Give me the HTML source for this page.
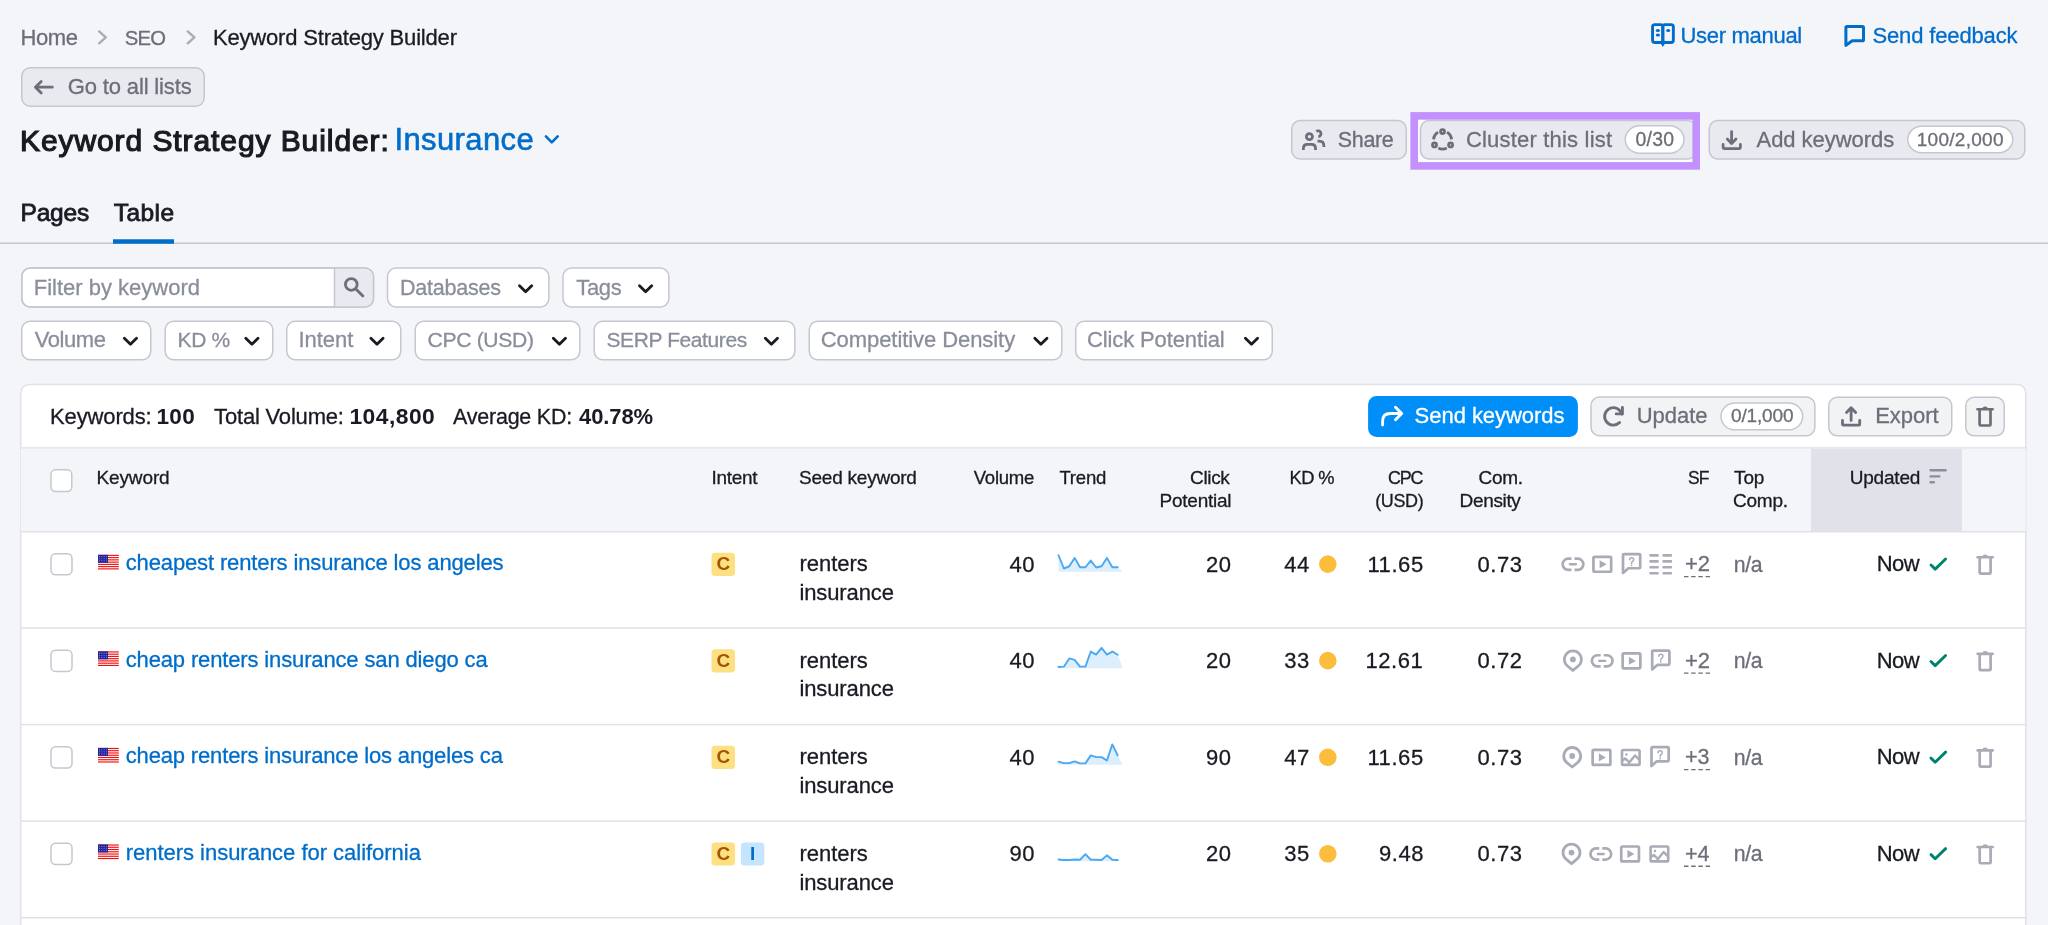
<!DOCTYPE html>
<html><head><meta charset="utf-8"><title>Keyword Strategy Builder</title>
<style>
html,body{margin:0;padding:0;background:#f4f5f9;width:2048px;height:925px;overflow:hidden;}
svg{position:absolute;left:0;top:0;display:block;font-family:"Liberation Sans",sans-serif;will-change:transform;}
</style></head><body>
<svg width="2048" height="925" viewBox="0 0 2048 925">
<path d="M99.1 31.4 L105.8 37.35 L99.1 43.3" fill="none" stroke="#a9abb6" stroke-width="2.4" stroke-linecap="round" stroke-linejoin="round"/>
<path d="M187.7 31.4 L194.4 37.35 L187.7 43.3" fill="none" stroke="#a9abb6" stroke-width="2.4" stroke-linecap="round" stroke-linejoin="round"/>
<g fill="none" stroke="#006dca" stroke-width="2.9" stroke-linejoin="round">
<rect x="1652.55" y="24.60" width="10.25" height="17.85" rx="2.20" fill="none" stroke="#006dca" stroke-width="2.9"/>
<rect x="1662.80" y="24.60" width="10.55" height="17.85" rx="2.20" fill="none" stroke="#006dca" stroke-width="2.9"/>
</g>
<path d="M1660.3 43 L1665.3 43 L1662.8 46.9 Z" fill="#006dca"/>
<ellipse cx="1657.9" cy="30.5" rx="2.1" ry="1.5" fill="#006dca"/>
<ellipse cx="1657.9" cy="35.1" rx="2.1" ry="1.5" fill="#006dca"/>
<ellipse cx="1668.2" cy="30.5" rx="2.1" ry="1.5" fill="#006dca"/>
<path d="M1845.9 45.4 V27.6 Q1845.9 26.5 1847 26.5 H1862.4 Q1863.5 26.5 1863.5 27.6 V39.7 Q1863.5 40.8 1862.4 40.8 H1852.2 Z" fill="none" stroke="#006dca" stroke-width="3.0" stroke-linecap="round" stroke-linejoin="round"/>
<rect x="21.75" y="67.75" width="182.50" height="38.50" rx="8.50" fill="#e9eaf0" stroke="#c4c7cf" stroke-width="1.5"/>
<path d="M52.3 87.2 H35.4 M41.2 81.4 L35.4 87.2 L41.2 93" fill="none" stroke="#6c6e79" stroke-width="2.8" stroke-linecap="round" stroke-linejoin="round"/>
<path d="M545.9 136.4 L551.8 142.4 L557.7 136.4" fill="none" stroke="#006dca" stroke-width="2.6" stroke-linecap="round" stroke-linejoin="round"/>
<rect x="1291.75" y="120.50" width="114.50" height="38.50" rx="8.50" fill="#e9eaf0" stroke="#c4c7cf" stroke-width="1.5"/>
<circle cx="1309.4" cy="136.6" r="3.05" fill="none" stroke="#6c6e79" stroke-width="2.75"/>
<path d="M1303.4 150 V148.3 Q1303.4 144.3 1307.4 144.3 H1311.5 Q1315.5 144.3 1315.5 148.3 V150" fill="none" stroke="#6c6e79" stroke-width="2.75" stroke-linecap="butt" stroke-linejoin="round"/>
<path d="M1316.3 131.4 A2.95 2.95 0 1 1 1318.3 136.7" fill="none" stroke="#6c6e79" stroke-width="2.75" stroke-linecap="butt" stroke-linejoin="round"/>
<path d="M1317.5 141.2 H1319.2 Q1323.9 141.2 1323.9 146 V147" fill="none" stroke="#6c6e79" stroke-width="2.75" stroke-linecap="butt" stroke-linejoin="round"/>
<rect x="1414.20" y="115.90" width="282.00" height="50.00" rx="0.00" fill="#fbfbfe"/>
<rect x="1420.50" y="120.50" width="275.75" height="38.50" rx="8.50" fill="#e9eaf0" stroke="#c4c7cf" stroke-width="1.5"/>
<circle cx="1442.55" cy="131.6" r="2.05" fill="none" stroke="#6c6e79" stroke-width="2.7"/>
<circle cx="1434.5" cy="144.9" r="2.05" fill="none" stroke="#6c6e79" stroke-width="2.7"/>
<circle cx="1450.6" cy="144.9" r="2.05" fill="none" stroke="#6c6e79" stroke-width="2.7"/>
<path d="M1447.02 132.35 A8.95 8.95 0 0 1 1451.47 139.32" fill="none" stroke="#6c6e79" stroke-width="2.9" stroke-linecap="butt" stroke-linejoin="round"/>
<path d="M1446.75 148.00 A8.95 8.95 0 0 1 1438.35 148.00" fill="none" stroke="#6c6e79" stroke-width="2.9" stroke-linecap="butt" stroke-linejoin="round"/>
<path d="M1433.63 139.32 A8.95 8.95 0 0 1 1438.08 132.35" fill="none" stroke="#6c6e79" stroke-width="2.9" stroke-linecap="butt" stroke-linejoin="round"/>
<rect x="1625.25" y="125.75" width="58.75" height="27.50" rx="14.50" fill="#ffffff" stroke="#c4c7cf" stroke-width="1.5"/>
<rect x="1414.2" y="115.9" width="282" height="50" fill="none" stroke="#c391fd" stroke-width="7.6"/>
<rect x="1709.25" y="120.50" width="315.50" height="38.50" rx="8.50" fill="#e9eaf0" stroke="#c4c7cf" stroke-width="1.5"/>
<path d="M1731.6 131.6 V143.2 M1727.3 139 L1731.6 143.6 L1736 139" fill="none" stroke="#6c6e79" stroke-width="2.75" stroke-linecap="round" stroke-linejoin="round"/>
<path d="M1723.1 144.4 V147.6 Q1723.1 148.7 1724.2 148.7 H1739.3 Q1740.4 148.7 1740.4 147.6 V144.4" fill="none" stroke="#6c6e79" stroke-width="2.75" stroke-linecap="round" stroke-linejoin="round"/>
<rect x="1907.75" y="126.25" width="105.00" height="26.50" rx="14.00" fill="#ffffff" stroke="#c4c7cf" stroke-width="1.5"/>
<rect x="0.00" y="242.50" width="2048.00" height="1.50" rx="0.00" fill="#c4c7cf"/>
<rect x="113.00" y="239.25" width="61.00" height="4.50" rx="0.00" fill="#006dca"/>
<rect x="21.75" y="268.00" width="351.75" height="39.00" rx="8.50" fill="#ffffff" stroke="#c4c7cf" stroke-width="1.5"/>
<path d="M334.5 268 H365.2 A8.3 8.3 0 0 1 373.5 276.3 V298.7 A8.3 8.3 0 0 1 365.2 307 H334.5 Z" fill="#e9eaf0"/>
<rect x="333.75" y="268.00" width="1.50" height="39.00" rx="0.00" fill="#c4c7cf"/>
<rect x="21.75" y="268.00" width="351.75" height="39.00" rx="8.50" fill="none" stroke="#c4c7cf" stroke-width="1.5"/>
<circle cx="351.3" cy="284.45" r="5.85" fill="none" stroke="#6c6e79" stroke-width="2.8"/>
<path d="M356.4 289.6 L362.9 296.1" fill="none" stroke="#6c6e79" stroke-width="2.8" stroke-linecap="round" stroke-linejoin="round"/>
<rect x="387.50" y="268.00" width="161.35" height="39.00" rx="8.50" fill="#ffffff" stroke="#c4c7cf" stroke-width="1.5"/>
<path d="M519.50 285.80 L525.60 291.80 L531.70 285.80" fill="none" stroke="#191b23" stroke-width="2.8" stroke-linecap="round" stroke-linejoin="round"/>
<rect x="563.00" y="268.00" width="105.85" height="39.00" rx="8.50" fill="#ffffff" stroke="#c4c7cf" stroke-width="1.5"/>
<path d="M639.50 285.80 L645.60 291.80 L651.70 285.80" fill="none" stroke="#191b23" stroke-width="2.8" stroke-linecap="round" stroke-linejoin="round"/>
<rect x="21.75" y="321.35" width="129.00" height="38.30" rx="8.50" fill="#ffffff" stroke="#c4c7cf" stroke-width="1.5"/>
<path d="M124.35 338.30 L130.45 344.30 L136.55 338.30" fill="none" stroke="#191b23" stroke-width="2.8" stroke-linecap="round" stroke-linejoin="round"/>
<rect x="165.15" y="321.35" width="107.60" height="38.30" rx="8.50" fill="#ffffff" stroke="#c4c7cf" stroke-width="1.5"/>
<path d="M245.80 338.30 L251.90 344.30 L258.00 338.30" fill="none" stroke="#191b23" stroke-width="2.8" stroke-linecap="round" stroke-linejoin="round"/>
<rect x="286.75" y="321.35" width="114.00" height="38.30" rx="8.50" fill="#ffffff" stroke="#c4c7cf" stroke-width="1.5"/>
<path d="M370.90 338.30 L377.00 344.30 L383.10 338.30" fill="none" stroke="#191b23" stroke-width="2.8" stroke-linecap="round" stroke-linejoin="round"/>
<rect x="415.25" y="321.35" width="164.60" height="38.30" rx="8.50" fill="#ffffff" stroke="#c4c7cf" stroke-width="1.5"/>
<path d="M553.30 338.30 L559.40 344.30 L565.50 338.30" fill="none" stroke="#191b23" stroke-width="2.8" stroke-linecap="round" stroke-linejoin="round"/>
<rect x="594.25" y="321.35" width="200.60" height="38.30" rx="8.50" fill="#ffffff" stroke="#c4c7cf" stroke-width="1.5"/>
<path d="M765.30 338.30 L771.40 344.30 L777.50 338.30" fill="none" stroke="#191b23" stroke-width="2.8" stroke-linecap="round" stroke-linejoin="round"/>
<rect x="809.25" y="321.35" width="252.50" height="38.30" rx="8.50" fill="#ffffff" stroke="#c4c7cf" stroke-width="1.5"/>
<path d="M1034.80 338.30 L1040.90 344.30 L1047.00 338.30" fill="none" stroke="#191b23" stroke-width="2.8" stroke-linecap="round" stroke-linejoin="round"/>
<rect x="1075.75" y="321.35" width="196.50" height="38.30" rx="8.50" fill="#ffffff" stroke="#c4c7cf" stroke-width="1.5"/>
<path d="M1245.40 338.30 L1251.50 344.30 L1257.60 338.30" fill="none" stroke="#191b23" stroke-width="2.8" stroke-linecap="round" stroke-linejoin="round"/>
<rect x="20.75" y="384.50" width="2005.00" height="800.00" rx="8.50" fill="#ffffff" stroke="#e0e1e9" stroke-width="1.5"/>
<rect x="20.00" y="447.25" width="2006.50" height="1.50" rx="0.00" fill="#e0e1e9"/>
<rect x="20.75" y="448.75" width="2005.00" height="82.50" rx="0.00" fill="#f4f5f9"/>
<rect x="1811.00" y="448.75" width="151.00" height="82.50" rx="0.00" fill="#e0e1e9"/>
<rect x="20.00" y="531.00" width="2006.50" height="1.50" rx="0.00" fill="#e0e1e9"/>
<rect x="20.00" y="627.30" width="2006.50" height="1.50" rx="0.00" fill="#e0e1e9"/>
<rect x="20.00" y="723.85" width="2006.50" height="1.50" rx="0.00" fill="#e0e1e9"/>
<rect x="20.00" y="820.40" width="2006.50" height="1.50" rx="0.00" fill="#e0e1e9"/>
<rect x="20.00" y="916.95" width="2006.50" height="1.50" rx="0.00" fill="#e0e1e9"/>
<rect x="1368.10" y="396.00" width="209.80" height="40.90" rx="8.50" fill="#008ff8"/>
<path d="M1382.6 425 V421.2 Q1382.6 413.5 1390.3 413.5 H1401.2 M1395.5 407.3 L1401.7 413.5 L1395.5 419.7" fill="none" stroke="#ffffff" stroke-width="2.9" stroke-linecap="round" stroke-linejoin="round"/>
<rect x="1591.00" y="397.00" width="223.85" height="38.75" rx="8.50" fill="#f2f3f5" stroke="#c4c7cf" stroke-width="1.5"/>
<path d="M1619.59 422.59 A8.75 8.75 0 1 1 1621.85 414.14" fill="none" stroke="#6c6e79" stroke-width="2.9" stroke-linecap="round" stroke-linejoin="round"/>
<path d="M1616.2 413.9 H1622.4 V407.4" fill="none" stroke="#6c6e79" stroke-width="2.9" stroke-linecap="round" stroke-linejoin="round"/>
<rect x="1721.00" y="403.00" width="81.65" height="26.85" rx="14.00" fill="#ffffff" stroke="#c4c7cf" stroke-width="1.5"/>
<rect x="1828.75" y="397.25" width="123.00" height="38.60" rx="8.50" fill="#f2f3f5" stroke="#c4c7cf" stroke-width="1.5"/>
<path d="M1851.1 420.6 V408.5 M1846.5 412.4 L1851.1 407.7 L1855.7 412.4" fill="none" stroke="#6c6e79" stroke-width="2.8" stroke-linecap="round" stroke-linejoin="round"/>
<path d="M1842.5 420.4 V424.1 Q1842.5 425.2 1843.6 425.2 H1858.6 Q1859.7 425.2 1859.7 424.1 V420.4" fill="none" stroke="#6c6e79" stroke-width="2.8" stroke-linecap="round" stroke-linejoin="round"/>
<rect x="1965.75" y="397.25" width="38.50" height="38.60" rx="8.50" fill="#f2f3f5" stroke="#c4c7cf" stroke-width="1.5"/>
<path d="M1977.50 409.20 H1992.60" fill="none" stroke="#6c6e79" stroke-width="2.6" stroke-linecap="round" stroke-linejoin="round"/><path d="M1982.20 409.40 Q1982.20 406.40 1985.05 406.40 Q1987.90 406.40 1987.90 409.40 Z" fill="#6c6e79"/><path d="M1979.60 409.70 V424.50 Q1979.60 425.50 1980.60 425.50 H1989.50 Q1990.50 425.50 1990.50 424.50 V409.70" fill="none" stroke="#6c6e79" stroke-width="2.7" stroke-linecap="round" stroke-linejoin="round"/>
<rect x="51.00" y="469.85" width="20.75" height="21.65" rx="4.50" fill="#ffffff" stroke="#c4c7cf" stroke-width="1.5"/>
<path d="M1930.6 470.3 H1945.6 M1930.6 476.4 H1939.3 M1930.6 482.3 H1933.8" fill="none" stroke="#8a8e9b" stroke-width="2.4" stroke-linecap="round" stroke-linejoin="round"/>
<rect x="51.00" y="553.65" width="21.00" height="21.20" rx="4.50" fill="#ffffff" stroke="#c4c7cf" stroke-width="1.5"/>
<rect x="98.00" y="554.80" width="20.80" height="14.70" rx="0.00" fill="#ffffff"/><rect x="98.00" y="554.80" width="20.80" height="1.15" rx="0.00" fill="#f20f0f"/><rect x="98.00" y="557.05" width="20.80" height="1.15" rx="0.00" fill="#f20f0f"/><rect x="98.00" y="559.30" width="20.80" height="1.15" rx="0.00" fill="#f20f0f"/><rect x="98.00" y="561.55" width="20.80" height="1.15" rx="0.00" fill="#f20f0f"/><rect x="98.00" y="563.80" width="20.80" height="1.15" rx="0.00" fill="#f20f0f"/><rect x="98.00" y="566.05" width="20.80" height="1.15" rx="0.00" fill="#f20f0f"/><rect x="98.00" y="568.30" width="20.80" height="1.15" rx="0.00" fill="#f20f0f"/><rect x="98.00" y="554.80" width="10.00" height="8.00" rx="0.00" fill="#23239c"/><circle cx="99.50" cy="556.60" r="0.55" fill="#9090d0"/><circle cx="101.80" cy="556.60" r="0.55" fill="#9090d0"/><circle cx="104.10" cy="556.60" r="0.55" fill="#9090d0"/><circle cx="106.40" cy="556.60" r="0.55" fill="#9090d0"/><circle cx="99.50" cy="558.70" r="0.55" fill="#9090d0"/><circle cx="101.80" cy="558.70" r="0.55" fill="#9090d0"/><circle cx="104.10" cy="558.70" r="0.55" fill="#9090d0"/><circle cx="106.40" cy="558.70" r="0.55" fill="#9090d0"/><circle cx="99.50" cy="560.80" r="0.55" fill="#9090d0"/><circle cx="101.80" cy="560.80" r="0.55" fill="#9090d0"/><circle cx="104.10" cy="560.80" r="0.55" fill="#9090d0"/><circle cx="106.40" cy="560.80" r="0.55" fill="#9090d0"/>
<rect x="711.50" y="552.75" width="23.50" height="23.20" rx="3.50" fill="#fce081"/>
<polygon points="1058.50,571.70 1058.50,555.25 1063.88,568.50 1069.26,566.25 1074.64,557.90 1080.02,567.25 1085.40,567.25 1090.78,560.60 1096.16,567.50 1101.54,566.25 1106.92,557.90 1112.30,567.25 1117.68,567.25 1122.60,571.70" fill="#ddeefd"/>
<polyline points="1058.50,555.25 1063.88,568.50 1069.26,566.25 1074.64,557.90 1080.02,567.25 1085.40,567.25 1090.78,560.60 1096.16,567.50 1101.54,566.25 1106.92,557.90 1112.30,567.25 1117.68,567.25" fill="none" stroke="#4aa9f3" stroke-width="1.9" stroke-linejoin="round" stroke-linecap="round"/>
<circle cx="1327.8" cy="564.10" r="8.8" fill="#fdbd3c"/>
<g transform="translate(1573.00 564.30)"><path d="M-1.55 -5.6 H-4.75 A5.6 5.6 0 0 0 -4.75 5.6 H-1.55 M1.55 -5.6 H4.75 A5.6 5.6 0 0 1 4.75 5.6 H1.55" fill="none" stroke="#a9abb6" stroke-width="2.7" stroke-linecap="butt" stroke-linejoin="round"/><path d="M-2.9 0 H2.9" fill="none" stroke="#a9abb6" stroke-width="2.4" stroke-linecap="round" stroke-linejoin="round"/></g>
<g transform="translate(1602.30 564.30)"><rect x="-8.85" y="-7.45" width="17.70" height="14.90" rx="1.20" fill="none" stroke="#a9abb6" stroke-width="2.7"/><path d="M-2.65 -4.05 L4.3 0.05 L-2.65 4.0 Z" fill="#a9abb6"/></g>
<g transform="translate(1631.60 564.30)"><path d="M-8.6 8.6 V-9.25 Q-8.6 -10.25 -7.6 -10.25 H7.6 Q8.6 -10.25 8.6 -9.25 V2.95 Q8.6 3.95 7.6 3.95 H-3.25 Z" fill="none" stroke="#a9abb6" stroke-width="2.7" stroke-linecap="round" stroke-linejoin="round"/><path d="M-2 -4.6 Q-2 -6.6 0.1 -6.6 Q2.1 -6.6 2.1 -4.7 Q2.1 -3.5 0.9 -2.8 Q0 -2.3 0 -1.2 V-0.8" fill="none" stroke="#a9abb6" stroke-width="1.5" stroke-linecap="round" stroke-linejoin="round"/><circle cx="0" cy="1.0" r="0.9" fill="#a9abb6"/></g>
<g transform="translate(1660.90 564.30)"><path d="M-10.4 -8.9 H-3.3 M2.7 -8.9 H10.0 M-10.4 -2.9 H-3.3 M2.7 -2.9 H10.0 M-10.4 3.0 H-3.3 M2.7 3.0 H10.0 M-10.4 8.9 H-3.3 M2.7 8.9 H10.0 " fill="none" stroke="#a9abb6" stroke-width="2.6" stroke-linecap="round" stroke-linejoin="round"/></g>
<line x1="1684" y1="576.60" x2="1710" y2="576.60" stroke="#6c6e79" stroke-width="1.3" stroke-dasharray="4.4 2.8"/>
<path d="M1931 565.00 L1935.2 569.10 L1945.6 559.00" fill="none" stroke="#00836a" stroke-width="2.9" stroke-linecap="round" stroke-linejoin="round"/>
<path d="M1977.60 557.30 H1992.70" fill="none" stroke="#a9abb6" stroke-width="2.6" stroke-linecap="round" stroke-linejoin="round"/><path d="M1982.30 557.50 Q1982.30 554.50 1985.15 554.50 Q1988.00 554.50 1988.00 557.50 Z" fill="#a9abb6"/><path d="M1979.70 557.80 V572.60 Q1979.70 573.60 1980.70 573.60 H1989.60 Q1990.60 573.60 1990.60 572.60 V557.80" fill="none" stroke="#a9abb6" stroke-width="2.7" stroke-linecap="round" stroke-linejoin="round"/>
<rect x="51.00" y="650.20" width="21.00" height="21.20" rx="4.50" fill="#ffffff" stroke="#c4c7cf" stroke-width="1.5"/>
<rect x="98.00" y="651.35" width="20.80" height="14.70" rx="0.00" fill="#ffffff"/><rect x="98.00" y="651.35" width="20.80" height="1.15" rx="0.00" fill="#f20f0f"/><rect x="98.00" y="653.60" width="20.80" height="1.15" rx="0.00" fill="#f20f0f"/><rect x="98.00" y="655.85" width="20.80" height="1.15" rx="0.00" fill="#f20f0f"/><rect x="98.00" y="658.10" width="20.80" height="1.15" rx="0.00" fill="#f20f0f"/><rect x="98.00" y="660.35" width="20.80" height="1.15" rx="0.00" fill="#f20f0f"/><rect x="98.00" y="662.60" width="20.80" height="1.15" rx="0.00" fill="#f20f0f"/><rect x="98.00" y="664.85" width="20.80" height="1.15" rx="0.00" fill="#f20f0f"/><rect x="98.00" y="651.35" width="10.00" height="8.00" rx="0.00" fill="#23239c"/><circle cx="99.50" cy="653.15" r="0.55" fill="#9090d0"/><circle cx="101.80" cy="653.15" r="0.55" fill="#9090d0"/><circle cx="104.10" cy="653.15" r="0.55" fill="#9090d0"/><circle cx="106.40" cy="653.15" r="0.55" fill="#9090d0"/><circle cx="99.50" cy="655.25" r="0.55" fill="#9090d0"/><circle cx="101.80" cy="655.25" r="0.55" fill="#9090d0"/><circle cx="104.10" cy="655.25" r="0.55" fill="#9090d0"/><circle cx="106.40" cy="655.25" r="0.55" fill="#9090d0"/><circle cx="99.50" cy="657.35" r="0.55" fill="#9090d0"/><circle cx="101.80" cy="657.35" r="0.55" fill="#9090d0"/><circle cx="104.10" cy="657.35" r="0.55" fill="#9090d0"/><circle cx="106.40" cy="657.35" r="0.55" fill="#9090d0"/>
<rect x="711.50" y="649.30" width="23.50" height="23.20" rx="3.50" fill="#fce081"/>
<polygon points="1058.50,668.25 1058.50,666.95 1063.88,666.65 1069.26,658.45 1074.64,659.85 1080.02,666.65 1085.40,666.65 1090.78,651.55 1096.16,654.55 1101.54,647.95 1106.92,654.55 1112.30,651.55 1117.68,654.75 1122.60,668.25" fill="#ddeefd"/>
<polyline points="1058.50,666.95 1063.88,666.65 1069.26,658.45 1074.64,659.85 1080.02,666.65 1085.40,666.65 1090.78,651.55 1096.16,654.55 1101.54,647.95 1106.92,654.55 1112.30,651.55 1117.68,654.75" fill="none" stroke="#4aa9f3" stroke-width="1.9" stroke-linejoin="round" stroke-linecap="round"/>
<circle cx="1327.8" cy="660.65" r="8.8" fill="#fdbd3c"/>
<g transform="translate(1572.90 660.85)"><path d="M0 9.6 L-5.39 5.17 A8.5 8.5 0 1 1 5.39 5.17 Z" fill="none" stroke="#a9abb6" stroke-width="2.8" stroke-linecap="round" stroke-linejoin="round"/><circle cx="0" cy="-1.4" r="2.9" fill="#a9abb6"/></g>
<g transform="translate(1602.20 660.85)"><path d="M-1.55 -5.6 H-4.75 A5.6 5.6 0 0 0 -4.75 5.6 H-1.55 M1.55 -5.6 H4.75 A5.6 5.6 0 0 1 4.75 5.6 H1.55" fill="none" stroke="#a9abb6" stroke-width="2.7" stroke-linecap="butt" stroke-linejoin="round"/><path d="M-2.9 0 H2.9" fill="none" stroke="#a9abb6" stroke-width="2.4" stroke-linecap="round" stroke-linejoin="round"/></g>
<g transform="translate(1631.50 660.85)"><rect x="-8.85" y="-7.45" width="17.70" height="14.90" rx="1.20" fill="none" stroke="#a9abb6" stroke-width="2.7"/><path d="M-2.65 -4.05 L4.3 0.05 L-2.65 4.0 Z" fill="#a9abb6"/></g>
<g transform="translate(1660.80 660.85)"><path d="M-8.6 8.6 V-9.25 Q-8.6 -10.25 -7.6 -10.25 H7.6 Q8.6 -10.25 8.6 -9.25 V2.95 Q8.6 3.95 7.6 3.95 H-3.25 Z" fill="none" stroke="#a9abb6" stroke-width="2.7" stroke-linecap="round" stroke-linejoin="round"/><path d="M-2 -4.6 Q-2 -6.6 0.1 -6.6 Q2.1 -6.6 2.1 -4.7 Q2.1 -3.5 0.9 -2.8 Q0 -2.3 0 -1.2 V-0.8" fill="none" stroke="#a9abb6" stroke-width="1.5" stroke-linecap="round" stroke-linejoin="round"/><circle cx="0" cy="1.0" r="0.9" fill="#a9abb6"/></g>
<line x1="1684" y1="673.15" x2="1710" y2="673.15" stroke="#6c6e79" stroke-width="1.3" stroke-dasharray="4.4 2.8"/>
<path d="M1931 661.55 L1935.2 665.65 L1945.6 655.55" fill="none" stroke="#00836a" stroke-width="2.9" stroke-linecap="round" stroke-linejoin="round"/>
<path d="M1977.60 653.85 H1992.70" fill="none" stroke="#a9abb6" stroke-width="2.6" stroke-linecap="round" stroke-linejoin="round"/><path d="M1982.30 654.05 Q1982.30 651.05 1985.15 651.05 Q1988.00 651.05 1988.00 654.05 Z" fill="#a9abb6"/><path d="M1979.70 654.35 V669.15 Q1979.70 670.15 1980.70 670.15 H1989.60 Q1990.60 670.15 1990.60 669.15 V654.35" fill="none" stroke="#a9abb6" stroke-width="2.7" stroke-linecap="round" stroke-linejoin="round"/>
<rect x="51.00" y="746.75" width="21.00" height="21.20" rx="4.50" fill="#ffffff" stroke="#c4c7cf" stroke-width="1.5"/>
<rect x="98.00" y="747.90" width="20.80" height="14.70" rx="0.00" fill="#ffffff"/><rect x="98.00" y="747.90" width="20.80" height="1.15" rx="0.00" fill="#f20f0f"/><rect x="98.00" y="750.15" width="20.80" height="1.15" rx="0.00" fill="#f20f0f"/><rect x="98.00" y="752.40" width="20.80" height="1.15" rx="0.00" fill="#f20f0f"/><rect x="98.00" y="754.65" width="20.80" height="1.15" rx="0.00" fill="#f20f0f"/><rect x="98.00" y="756.90" width="20.80" height="1.15" rx="0.00" fill="#f20f0f"/><rect x="98.00" y="759.15" width="20.80" height="1.15" rx="0.00" fill="#f20f0f"/><rect x="98.00" y="761.40" width="20.80" height="1.15" rx="0.00" fill="#f20f0f"/><rect x="98.00" y="747.90" width="10.00" height="8.00" rx="0.00" fill="#23239c"/><circle cx="99.50" cy="749.70" r="0.55" fill="#9090d0"/><circle cx="101.80" cy="749.70" r="0.55" fill="#9090d0"/><circle cx="104.10" cy="749.70" r="0.55" fill="#9090d0"/><circle cx="106.40" cy="749.70" r="0.55" fill="#9090d0"/><circle cx="99.50" cy="751.80" r="0.55" fill="#9090d0"/><circle cx="101.80" cy="751.80" r="0.55" fill="#9090d0"/><circle cx="104.10" cy="751.80" r="0.55" fill="#9090d0"/><circle cx="106.40" cy="751.80" r="0.55" fill="#9090d0"/><circle cx="99.50" cy="753.90" r="0.55" fill="#9090d0"/><circle cx="101.80" cy="753.90" r="0.55" fill="#9090d0"/><circle cx="104.10" cy="753.90" r="0.55" fill="#9090d0"/><circle cx="106.40" cy="753.90" r="0.55" fill="#9090d0"/>
<rect x="711.50" y="745.85" width="23.50" height="23.20" rx="3.50" fill="#fce081"/>
<polygon points="1058.50,764.80 1058.50,761.70 1063.88,763.10 1069.26,763.10 1074.64,761.40 1080.02,763.40 1085.40,763.40 1090.78,755.40 1096.16,757.10 1101.54,757.10 1106.92,760.50 1112.30,744.40 1117.68,755.40 1122.60,764.80" fill="#ddeefd"/>
<polyline points="1058.50,761.70 1063.88,763.10 1069.26,763.10 1074.64,761.40 1080.02,763.40 1085.40,763.40 1090.78,755.40 1096.16,757.10 1101.54,757.10 1106.92,760.50 1112.30,744.40 1117.68,755.40" fill="none" stroke="#4aa9f3" stroke-width="1.9" stroke-linejoin="round" stroke-linecap="round"/>
<circle cx="1327.8" cy="757.20" r="8.8" fill="#fdbd3c"/>
<g transform="translate(1572.20 757.40)"><path d="M0 9.6 L-5.39 5.17 A8.5 8.5 0 1 1 5.39 5.17 Z" fill="none" stroke="#a9abb6" stroke-width="2.8" stroke-linecap="round" stroke-linejoin="round"/><circle cx="0" cy="-1.4" r="2.9" fill="#a9abb6"/></g>
<g transform="translate(1601.50 757.40)"><rect x="-8.85" y="-7.45" width="17.70" height="14.90" rx="1.20" fill="none" stroke="#a9abb6" stroke-width="2.7"/><path d="M-2.65 -4.05 L4.3 0.05 L-2.65 4.0 Z" fill="#a9abb6"/></g>
<g transform="translate(1630.80 757.40)"><rect x="-8.80" y="-7.45" width="17.60" height="14.90" rx="1.20" fill="none" stroke="#a9abb6" stroke-width="2.6"/><circle cx="-4.4" cy="-2.9" r="1.25" fill="#a9abb6"/><path d="M-7.5 2.6 L-5.6 1.1 L-3 3.5 M-2 5.7 L4.2 -1.9 L7.9 1.75" fill="none" stroke="#a9abb6" stroke-width="2.4" stroke-linecap="round" stroke-linejoin="round"/></g>
<g transform="translate(1660.10 757.40)"><path d="M-8.6 8.6 V-9.25 Q-8.6 -10.25 -7.6 -10.25 H7.6 Q8.6 -10.25 8.6 -9.25 V2.95 Q8.6 3.95 7.6 3.95 H-3.25 Z" fill="none" stroke="#a9abb6" stroke-width="2.7" stroke-linecap="round" stroke-linejoin="round"/><path d="M-2 -4.6 Q-2 -6.6 0.1 -6.6 Q2.1 -6.6 2.1 -4.7 Q2.1 -3.5 0.9 -2.8 Q0 -2.3 0 -1.2 V-0.8" fill="none" stroke="#a9abb6" stroke-width="1.5" stroke-linecap="round" stroke-linejoin="round"/><circle cx="0" cy="1.0" r="0.9" fill="#a9abb6"/></g>
<line x1="1684" y1="769.70" x2="1710" y2="769.70" stroke="#6c6e79" stroke-width="1.3" stroke-dasharray="4.4 2.8"/>
<path d="M1931 758.10 L1935.2 762.20 L1945.6 752.10" fill="none" stroke="#00836a" stroke-width="2.9" stroke-linecap="round" stroke-linejoin="round"/>
<path d="M1977.60 750.40 H1992.70" fill="none" stroke="#a9abb6" stroke-width="2.6" stroke-linecap="round" stroke-linejoin="round"/><path d="M1982.30 750.60 Q1982.30 747.60 1985.15 747.60 Q1988.00 747.60 1988.00 750.60 Z" fill="#a9abb6"/><path d="M1979.70 750.90 V765.70 Q1979.70 766.70 1980.70 766.70 H1989.60 Q1990.60 766.70 1990.60 765.70 V750.90" fill="none" stroke="#a9abb6" stroke-width="2.7" stroke-linecap="round" stroke-linejoin="round"/>
<rect x="51.00" y="843.30" width="21.00" height="21.20" rx="4.50" fill="#ffffff" stroke="#c4c7cf" stroke-width="1.5"/>
<rect x="98.00" y="844.45" width="20.80" height="14.70" rx="0.00" fill="#ffffff"/><rect x="98.00" y="844.45" width="20.80" height="1.15" rx="0.00" fill="#f20f0f"/><rect x="98.00" y="846.70" width="20.80" height="1.15" rx="0.00" fill="#f20f0f"/><rect x="98.00" y="848.95" width="20.80" height="1.15" rx="0.00" fill="#f20f0f"/><rect x="98.00" y="851.20" width="20.80" height="1.15" rx="0.00" fill="#f20f0f"/><rect x="98.00" y="853.45" width="20.80" height="1.15" rx="0.00" fill="#f20f0f"/><rect x="98.00" y="855.70" width="20.80" height="1.15" rx="0.00" fill="#f20f0f"/><rect x="98.00" y="857.95" width="20.80" height="1.15" rx="0.00" fill="#f20f0f"/><rect x="98.00" y="844.45" width="10.00" height="8.00" rx="0.00" fill="#23239c"/><circle cx="99.50" cy="846.25" r="0.55" fill="#9090d0"/><circle cx="101.80" cy="846.25" r="0.55" fill="#9090d0"/><circle cx="104.10" cy="846.25" r="0.55" fill="#9090d0"/><circle cx="106.40" cy="846.25" r="0.55" fill="#9090d0"/><circle cx="99.50" cy="848.35" r="0.55" fill="#9090d0"/><circle cx="101.80" cy="848.35" r="0.55" fill="#9090d0"/><circle cx="104.10" cy="848.35" r="0.55" fill="#9090d0"/><circle cx="106.40" cy="848.35" r="0.55" fill="#9090d0"/><circle cx="99.50" cy="850.45" r="0.55" fill="#9090d0"/><circle cx="101.80" cy="850.45" r="0.55" fill="#9090d0"/><circle cx="104.10" cy="850.45" r="0.55" fill="#9090d0"/><circle cx="106.40" cy="850.45" r="0.55" fill="#9090d0"/>
<rect x="711.50" y="842.40" width="23.50" height="23.20" rx="3.50" fill="#fce081"/>
<rect x="740.90" y="842.40" width="23.50" height="23.20" rx="3.50" fill="#c4e5fd"/>
<polygon points="1058.50,861.35 1058.50,859.45 1063.88,859.95 1069.26,859.95 1074.64,859.45 1080.02,859.75 1085.40,854.15 1090.78,859.75 1096.16,859.75 1101.54,859.95 1106.92,855.35 1112.30,859.75 1117.68,859.95 1122.60,861.35" fill="#ddeefd"/>
<polyline points="1058.50,859.45 1063.88,859.95 1069.26,859.95 1074.64,859.45 1080.02,859.75 1085.40,854.15 1090.78,859.75 1096.16,859.75 1101.54,859.95 1106.92,855.35 1112.30,859.75 1117.68,859.95" fill="none" stroke="#4aa9f3" stroke-width="1.9" stroke-linejoin="round" stroke-linecap="round"/>
<circle cx="1327.8" cy="853.75" r="8.8" fill="#fdbd3c"/>
<g transform="translate(1571.50 853.95)"><path d="M0 9.6 L-5.39 5.17 A8.5 8.5 0 1 1 5.39 5.17 Z" fill="none" stroke="#a9abb6" stroke-width="2.8" stroke-linecap="round" stroke-linejoin="round"/><circle cx="0" cy="-1.4" r="2.9" fill="#a9abb6"/></g>
<g transform="translate(1600.80 853.95)"><path d="M-1.55 -5.6 H-4.75 A5.6 5.6 0 0 0 -4.75 5.6 H-1.55 M1.55 -5.6 H4.75 A5.6 5.6 0 0 1 4.75 5.6 H1.55" fill="none" stroke="#a9abb6" stroke-width="2.7" stroke-linecap="butt" stroke-linejoin="round"/><path d="M-2.9 0 H2.9" fill="none" stroke="#a9abb6" stroke-width="2.4" stroke-linecap="round" stroke-linejoin="round"/></g>
<g transform="translate(1630.10 853.95)"><rect x="-8.85" y="-7.45" width="17.70" height="14.90" rx="1.20" fill="none" stroke="#a9abb6" stroke-width="2.7"/><path d="M-2.65 -4.05 L4.3 0.05 L-2.65 4.0 Z" fill="#a9abb6"/></g>
<g transform="translate(1659.40 853.95)"><rect x="-8.80" y="-7.45" width="17.60" height="14.90" rx="1.20" fill="none" stroke="#a9abb6" stroke-width="2.6"/><circle cx="-4.4" cy="-2.9" r="1.25" fill="#a9abb6"/><path d="M-7.5 2.6 L-5.6 1.1 L-3 3.5 M-2 5.7 L4.2 -1.9 L7.9 1.75" fill="none" stroke="#a9abb6" stroke-width="2.4" stroke-linecap="round" stroke-linejoin="round"/></g>
<line x1="1684" y1="866.25" x2="1710" y2="866.25" stroke="#6c6e79" stroke-width="1.3" stroke-dasharray="4.4 2.8"/>
<path d="M1931 854.65 L1935.2 858.75 L1945.6 848.65" fill="none" stroke="#00836a" stroke-width="2.9" stroke-linecap="round" stroke-linejoin="round"/>
<path d="M1977.60 846.95 H1992.70" fill="none" stroke="#a9abb6" stroke-width="2.6" stroke-linecap="round" stroke-linejoin="round"/><path d="M1982.30 847.15 Q1982.30 844.15 1985.15 844.15 Q1988.00 844.15 1988.00 847.15 Z" fill="#a9abb6"/><path d="M1979.70 847.45 V862.25 Q1979.70 863.25 1980.70 863.25 H1989.60 Q1990.60 863.25 1990.60 862.25 V847.45" fill="none" stroke="#a9abb6" stroke-width="2.7" stroke-linecap="round" stroke-linejoin="round"/>
<text x="20.40" y="45.10" font-size="22" font-weight="400" fill="#6c6e79" stroke="#6c6e79" stroke-width="0.3" textLength="57.59" lengthAdjust="spacing">Home</text>
<text x="124.80" y="45.10" font-size="20.28" font-weight="400" fill="#6c6e79" stroke="#6c6e79" stroke-width="0.3" textLength="41.11" lengthAdjust="spacing">SEO</text>
<text x="213.00" y="45.10" font-size="22" font-weight="400" fill="#191b23" stroke="#191b23" stroke-width="0.3" textLength="243.98" lengthAdjust="spacing">Keyword Strategy Builder</text>
<text x="1680.50" y="43.10" font-size="22" font-weight="400" fill="#006dca" stroke="#006dca" stroke-width="0.3" textLength="121.72" lengthAdjust="spacing">User manual</text>
<text x="1872.50" y="43.10" font-size="22" font-weight="400" fill="#006dca" stroke="#006dca" stroke-width="0.3" textLength="145.03" lengthAdjust="spacing">Send feedback</text>
<text x="67.70" y="93.85" font-size="22" font-weight="400" fill="#6c6e79" stroke="#6c6e79" stroke-width="0.3" textLength="123.94" lengthAdjust="spacing">Go to all lists</text>
<text x="20.00" y="150.60" font-size="30.0" font-weight="400" fill="#191b23" stroke="#191b23" stroke-width="1.2" textLength="368.84" lengthAdjust="spacing">Keyword Strategy Builder:</text>
<text x="394.50" y="149.60" font-size="31" font-weight="400" fill="#006dca" stroke="#006dca" stroke-width="0.6" textLength="139.14" lengthAdjust="spacing">Insurance</text>
<text x="1337.75" y="146.50" font-size="21.47" font-weight="400" fill="#6c6e79" stroke="#6c6e79" stroke-width="0.3" textLength="56.05" lengthAdjust="spacing">Share</text>
<text x="1465.90" y="146.50" font-size="22" font-weight="400" fill="#6c6e79" stroke="#6c6e79" stroke-width="0.3" textLength="146.15" lengthAdjust="spacing">Cluster this list</text>
<text x="1635.60" y="145.60" font-size="19.46" font-weight="400" fill="#6c6e79" stroke="#6c6e79" stroke-width="0.3" textLength="38.34" lengthAdjust="spacing">0/30</text>
<text x="1756.50" y="146.50" font-size="22" font-weight="400" fill="#6c6e79" stroke="#6c6e79" stroke-width="0.3" textLength="137.69" lengthAdjust="spacing">Add keywords</text>
<text x="1916.75" y="145.60" font-size="19" font-weight="400" fill="#6c6e79" stroke="#6c6e79" stroke-width="0.3" textLength="86.78" lengthAdjust="spacing">100/2,000</text>
<text x="20.50" y="220.70" font-size="24.5" font-weight="400" fill="#191b23" stroke="#191b23" stroke-width="0.8" textLength="68.72" lengthAdjust="spacing">Pages</text>
<text x="113.75" y="220.70" font-size="24.5" font-weight="400" fill="#191b23" stroke="#191b23" stroke-width="0.8" textLength="60.33" lengthAdjust="spacing">Table</text>
<text x="33.75" y="295.00" font-size="22" font-weight="400" fill="#8a8e9b" stroke="#8a8e9b" stroke-width="0.3" textLength="166.28" lengthAdjust="spacing">Filter by keyword</text>
<text x="400.00" y="295.00" font-size="21.52" font-weight="400" fill="#8a8e9b" stroke="#8a8e9b" stroke-width="0.3" textLength="101.12" lengthAdjust="spacing">Databases</text>
<text x="576.25" y="295.00" font-size="22" font-weight="400" fill="#8a8e9b" stroke="#8a8e9b" stroke-width="0.3" textLength="45.48" lengthAdjust="spacing">Tags</text>
<text x="34.75" y="346.90" font-size="22" font-weight="400" fill="#8a8e9b" stroke="#8a8e9b" stroke-width="0.3" textLength="71.24" lengthAdjust="spacing">Volume</text>
<text x="177.50" y="346.90" font-size="21.0" font-weight="400" fill="#8a8e9b" stroke="#8a8e9b" stroke-width="0.3" textLength="52.59" lengthAdjust="spacing">KD %</text>
<text x="298.40" y="346.90" font-size="22" font-weight="400" fill="#8a8e9b" stroke="#8a8e9b" stroke-width="0.3" textLength="55.05" lengthAdjust="spacing">Intent</text>
<text x="427.50" y="346.90" font-size="21.1" font-weight="400" fill="#8a8e9b" stroke="#8a8e9b" stroke-width="0.3" textLength="106.48" lengthAdjust="spacing">CPC (USD)</text>
<text x="606.50" y="346.90" font-size="20.97" font-weight="400" fill="#8a8e9b" stroke="#8a8e9b" stroke-width="0.3" textLength="140.70" lengthAdjust="spacing">SERP Features</text>
<text x="820.75" y="346.90" font-size="22" font-weight="400" fill="#8a8e9b" stroke="#8a8e9b" stroke-width="0.3" textLength="194.39" lengthAdjust="spacing">Competitive Density</text>
<text x="1087.00" y="346.90" font-size="22" font-weight="400" fill="#8a8e9b" stroke="#8a8e9b" stroke-width="0.3" textLength="137.64" lengthAdjust="spacing">Click Potential</text>
<text x="50.00" y="424.10" font-size="22" font-weight="400" fill="#191b23" stroke="#191b23" stroke-width="0.3" textLength="101.72" lengthAdjust="spacing">Keywords:</text>
<text x="156.50" y="424.10" font-size="22.6" font-weight="700" fill="#191b23" textLength="38.30" lengthAdjust="spacing">100</text>
<text x="214.10" y="424.10" font-size="22" font-weight="400" fill="#191b23" stroke="#191b23" stroke-width="0.3" textLength="129.88" lengthAdjust="spacing">Total Volume:</text>
<text x="349.40" y="424.10" font-size="22.88" font-weight="700" fill="#191b23" textLength="85.39" lengthAdjust="spacing">104,800</text>
<text x="453.10" y="424.10" font-size="21.45" font-weight="400" fill="#191b23" stroke="#191b23" stroke-width="0.3" textLength="119.06" lengthAdjust="spacing">Average KD:</text>
<text x="579.10" y="424.10" font-size="22" font-weight="700" fill="#191b23" textLength="74.02" lengthAdjust="spacing">40.78%</text>
<text x="1414.60" y="423.10" font-size="22" font-weight="400" fill="#ffffff" stroke="#ffffff" stroke-width="0.3" textLength="149.92" lengthAdjust="spacing">Send keywords</text>
<text x="1636.75" y="423.00" font-size="22" font-weight="400" fill="#6c6e79" stroke="#6c6e79" stroke-width="0.3" textLength="70.70" lengthAdjust="spacing">Update</text>
<text x="1731.00" y="421.90" font-size="19" font-weight="400" fill="#6c6e79" stroke="#6c6e79" stroke-width="0.3" textLength="62.51" lengthAdjust="spacing">0/1,000</text>
<text x="1875.20" y="423.00" font-size="22" font-weight="400" fill="#6c6e79" stroke="#6c6e79" stroke-width="0.3" textLength="63.49" lengthAdjust="spacing">Export</text>
<text x="96.50" y="484.00" font-size="19" font-weight="400" fill="#191b23" stroke="#191b23" stroke-width="0.3" textLength="73.17" lengthAdjust="spacing">Keyword</text>
<text x="711.50" y="484.00" font-size="19" font-weight="400" fill="#191b23" stroke="#191b23" stroke-width="0.3" textLength="46.15" lengthAdjust="spacing">Intent</text>
<text x="799.00" y="484.00" font-size="19" font-weight="400" fill="#191b23" stroke="#191b23" stroke-width="0.3" textLength="117.91" lengthAdjust="spacing">Seed keyword</text>
<text x="973.75" y="484.00" font-size="18.57" font-weight="400" fill="#191b23" stroke="#191b23" stroke-width="0.3" textLength="60.57" lengthAdjust="spacing">Volume</text>
<text x="1059.40" y="484.00" font-size="18.57" font-weight="400" fill="#191b23" stroke="#191b23" stroke-width="0.3" textLength="47.01" lengthAdjust="spacing">Trend</text>
<text x="1190.00" y="484.00" font-size="19" font-weight="400" fill="#191b23" stroke="#191b23" stroke-width="0.3" textLength="39.77" lengthAdjust="spacing">Click</text>
<text x="1159.60" y="507.20" font-size="19" font-weight="400" fill="#191b23" stroke="#191b23" stroke-width="0.3" textLength="71.95" lengthAdjust="spacing">Potential</text>
<text x="1289.60" y="484.00" font-size="18.3" font-weight="400" fill="#191b23" stroke="#191b23" stroke-width="0.3" textLength="44.88" lengthAdjust="spacing">KD %</text>
<text x="1388.10" y="484.00" font-size="17.93" font-weight="400" fill="#191b23" stroke="#191b23" stroke-width="0.3" textLength="35.24" lengthAdjust="spacing">CPC</text>
<text x="1375.25" y="507.20" font-size="17.98" font-weight="400" fill="#191b23" stroke="#191b23" stroke-width="0.3" textLength="48.41" lengthAdjust="spacing">(USD)</text>
<text x="1478.60" y="484.00" font-size="19" font-weight="400" fill="#191b23" stroke="#191b23" stroke-width="0.3" textLength="44.31" lengthAdjust="spacing">Com.</text>
<text x="1459.60" y="507.20" font-size="19" font-weight="400" fill="#191b23" stroke="#191b23" stroke-width="0.3" textLength="61.26" lengthAdjust="spacing">Density</text>
<text x="1688.10" y="484.00" font-size="17.47" font-weight="400" fill="#191b23" stroke="#191b23" stroke-width="0.3" textLength="21.31" lengthAdjust="spacing">SF</text>
<text x="1734.10" y="484.00" font-size="19" font-weight="400" fill="#191b23" stroke="#191b23" stroke-width="0.3" textLength="30.29" lengthAdjust="spacing">Top</text>
<text x="1733.10" y="507.20" font-size="19" font-weight="400" fill="#191b23" stroke="#191b23" stroke-width="0.3" textLength="54.87" lengthAdjust="spacing">Comp.</text>
<text x="1849.70" y="484.00" font-size="19" font-weight="400" fill="#191b23" stroke="#191b23" stroke-width="0.3" textLength="70.64" lengthAdjust="spacing">Updated</text>
<text x="125.70" y="569.90" font-size="22" font-weight="400" fill="#006dca" stroke="#006dca" stroke-width="0.3" textLength="377.85" lengthAdjust="spacing">cheapest renters insurance los angeles</text>
<text x="799.40" y="571.00" font-size="22" font-weight="400" fill="#191b23" stroke="#191b23" stroke-width="0.3" textLength="68.33" lengthAdjust="spacing">renters</text>
<text x="799.40" y="599.80" font-size="22" font-weight="400" fill="#191b23" stroke="#191b23" stroke-width="0.3" textLength="94.49" lengthAdjust="spacing">insurance</text>
<text x="1009.41" y="571.50" font-size="22" font-weight="400" fill="#191b23" stroke="#191b23" stroke-width="0.3" textLength="25.07" lengthAdjust="spacing">40</text>
<text x="1205.91" y="571.50" font-size="22" font-weight="400" fill="#191b23" stroke="#191b23" stroke-width="0.3" textLength="25.07" lengthAdjust="spacing">20</text>
<text x="1284.16" y="571.50" font-size="22" font-weight="400" fill="#191b23" stroke="#191b23" stroke-width="0.3" textLength="25.07" lengthAdjust="spacing">44</text>
<text x="1367.39" y="571.50" font-size="22" font-weight="400" fill="#191b23" stroke="#191b23" stroke-width="0.3" textLength="55.78" lengthAdjust="spacing">11.65</text>
<text x="1477.48" y="571.50" font-size="22" font-weight="400" fill="#191b23" stroke="#191b23" stroke-width="0.3" textLength="44.60" lengthAdjust="spacing">0.73</text>
<text x="1684.90" y="571.25" font-size="22" font-weight="400" fill="#6c6e79" stroke="#6c6e79" stroke-width="0.3" textLength="25.19" lengthAdjust="spacing">+2</text>
<text x="1733.75" y="571.50" font-size="21.27" font-weight="400" fill="#6c6e79" stroke="#6c6e79" stroke-width="0.3" textLength="28.91" lengthAdjust="spacing">n/a</text>
<text x="1876.70" y="571.10" font-size="22" font-weight="400" fill="#191b23" stroke="#191b23" stroke-width="0.3" textLength="42.92" lengthAdjust="spacing">Now</text>
<text x="125.70" y="666.50" font-size="22" font-weight="400" fill="#006dca" stroke="#006dca" stroke-width="0.3" textLength="361.96" lengthAdjust="spacing">cheap renters insurance san diego ca</text>
<text x="799.40" y="667.60" font-size="22" font-weight="400" fill="#191b23" stroke="#191b23" stroke-width="0.3" textLength="68.33" lengthAdjust="spacing">renters</text>
<text x="799.40" y="696.40" font-size="22" font-weight="400" fill="#191b23" stroke="#191b23" stroke-width="0.3" textLength="94.49" lengthAdjust="spacing">insurance</text>
<text x="1009.41" y="668.10" font-size="22" font-weight="400" fill="#191b23" stroke="#191b23" stroke-width="0.3" textLength="25.07" lengthAdjust="spacing">40</text>
<text x="1205.91" y="668.10" font-size="22" font-weight="400" fill="#191b23" stroke="#191b23" stroke-width="0.3" textLength="25.07" lengthAdjust="spacing">20</text>
<text x="1284.16" y="668.10" font-size="22" font-weight="400" fill="#191b23" stroke="#191b23" stroke-width="0.3" textLength="25.07" lengthAdjust="spacing">33</text>
<text x="1365.39" y="668.10" font-size="22" font-weight="400" fill="#191b23" stroke="#191b23" stroke-width="0.3" textLength="57.42" lengthAdjust="spacing">12.61</text>
<text x="1477.48" y="668.10" font-size="22" font-weight="400" fill="#191b23" stroke="#191b23" stroke-width="0.3" textLength="44.60" lengthAdjust="spacing">0.72</text>
<text x="1684.90" y="667.85" font-size="22" font-weight="400" fill="#6c6e79" stroke="#6c6e79" stroke-width="0.3" textLength="25.19" lengthAdjust="spacing">+2</text>
<text x="1733.75" y="668.10" font-size="21.27" font-weight="400" fill="#6c6e79" stroke="#6c6e79" stroke-width="0.3" textLength="28.91" lengthAdjust="spacing">n/a</text>
<text x="1876.70" y="667.70" font-size="22" font-weight="400" fill="#191b23" stroke="#191b23" stroke-width="0.3" textLength="42.92" lengthAdjust="spacing">Now</text>
<text x="125.70" y="763.10" font-size="22" font-weight="400" fill="#006dca" stroke="#006dca" stroke-width="0.3" textLength="377.20" lengthAdjust="spacing">cheap renters insurance los angeles ca</text>
<text x="799.40" y="764.20" font-size="22" font-weight="400" fill="#191b23" stroke="#191b23" stroke-width="0.3" textLength="68.33" lengthAdjust="spacing">renters</text>
<text x="799.40" y="793.00" font-size="22" font-weight="400" fill="#191b23" stroke="#191b23" stroke-width="0.3" textLength="94.49" lengthAdjust="spacing">insurance</text>
<text x="1009.41" y="764.70" font-size="22" font-weight="400" fill="#191b23" stroke="#191b23" stroke-width="0.3" textLength="25.07" lengthAdjust="spacing">40</text>
<text x="1205.91" y="764.70" font-size="22" font-weight="400" fill="#191b23" stroke="#191b23" stroke-width="0.3" textLength="25.07" lengthAdjust="spacing">90</text>
<text x="1284.16" y="764.70" font-size="22" font-weight="400" fill="#191b23" stroke="#191b23" stroke-width="0.3" textLength="25.07" lengthAdjust="spacing">47</text>
<text x="1367.39" y="764.70" font-size="22" font-weight="400" fill="#191b23" stroke="#191b23" stroke-width="0.3" textLength="55.78" lengthAdjust="spacing">11.65</text>
<text x="1477.48" y="764.70" font-size="22" font-weight="400" fill="#191b23" stroke="#191b23" stroke-width="0.3" textLength="44.60" lengthAdjust="spacing">0.73</text>
<text x="1684.90" y="764.45" font-size="21.5" font-weight="400" fill="#6c6e79" stroke="#6c6e79" stroke-width="0.3" textLength="24.62" lengthAdjust="spacing">+3</text>
<text x="1733.75" y="764.70" font-size="21.27" font-weight="400" fill="#6c6e79" stroke="#6c6e79" stroke-width="0.3" textLength="28.91" lengthAdjust="spacing">n/a</text>
<text x="1876.70" y="764.30" font-size="22" font-weight="400" fill="#191b23" stroke="#191b23" stroke-width="0.3" textLength="42.92" lengthAdjust="spacing">Now</text>
<text x="125.70" y="859.70" font-size="22" font-weight="400" fill="#006dca" stroke="#006dca" stroke-width="0.3" textLength="295.22" lengthAdjust="spacing">renters insurance for california</text>
<text x="799.40" y="860.80" font-size="22" font-weight="400" fill="#191b23" stroke="#191b23" stroke-width="0.3" textLength="68.33" lengthAdjust="spacing">renters</text>
<text x="799.40" y="889.60" font-size="22" font-weight="400" fill="#191b23" stroke="#191b23" stroke-width="0.3" textLength="94.49" lengthAdjust="spacing">insurance</text>
<text x="1009.41" y="861.30" font-size="22" font-weight="400" fill="#191b23" stroke="#191b23" stroke-width="0.3" textLength="25.07" lengthAdjust="spacing">90</text>
<text x="1205.91" y="861.30" font-size="22" font-weight="400" fill="#191b23" stroke="#191b23" stroke-width="0.3" textLength="25.07" lengthAdjust="spacing">20</text>
<text x="1284.16" y="861.30" font-size="22" font-weight="400" fill="#191b23" stroke="#191b23" stroke-width="0.3" textLength="25.07" lengthAdjust="spacing">35</text>
<text x="1378.98" y="861.30" font-size="22" font-weight="400" fill="#191b23" stroke="#191b23" stroke-width="0.3" textLength="44.60" lengthAdjust="spacing">9.48</text>
<text x="1477.48" y="861.30" font-size="22" font-weight="400" fill="#191b23" stroke="#191b23" stroke-width="0.3" textLength="44.60" lengthAdjust="spacing">0.73</text>
<text x="1684.90" y="861.05" font-size="21.5" font-weight="400" fill="#6c6e79" stroke="#6c6e79" stroke-width="0.3" textLength="24.62" lengthAdjust="spacing">+4</text>
<text x="1733.75" y="861.30" font-size="21.27" font-weight="400" fill="#6c6e79" stroke="#6c6e79" stroke-width="0.3" textLength="28.91" lengthAdjust="spacing">n/a</text>
<text x="1876.70" y="860.90" font-size="22" font-weight="400" fill="#191b23" stroke="#191b23" stroke-width="0.3" textLength="42.92" lengthAdjust="spacing">Now</text>
<text x="723.25" y="570.30" font-size="19" font-weight="700" fill="#a35600" text-anchor="middle">C</text>
<text x="723.25" y="666.85" font-size="19" font-weight="700" fill="#a35600" text-anchor="middle">C</text>
<text x="723.25" y="763.40" font-size="19" font-weight="700" fill="#a35600" text-anchor="middle">C</text>
<text x="723.25" y="859.95" font-size="19" font-weight="700" fill="#a35600" text-anchor="middle">C</text>
<text x="752.65" y="859.95" font-size="19" font-weight="700" fill="#006dca" text-anchor="middle">I</text>
</svg>
</body></html>
